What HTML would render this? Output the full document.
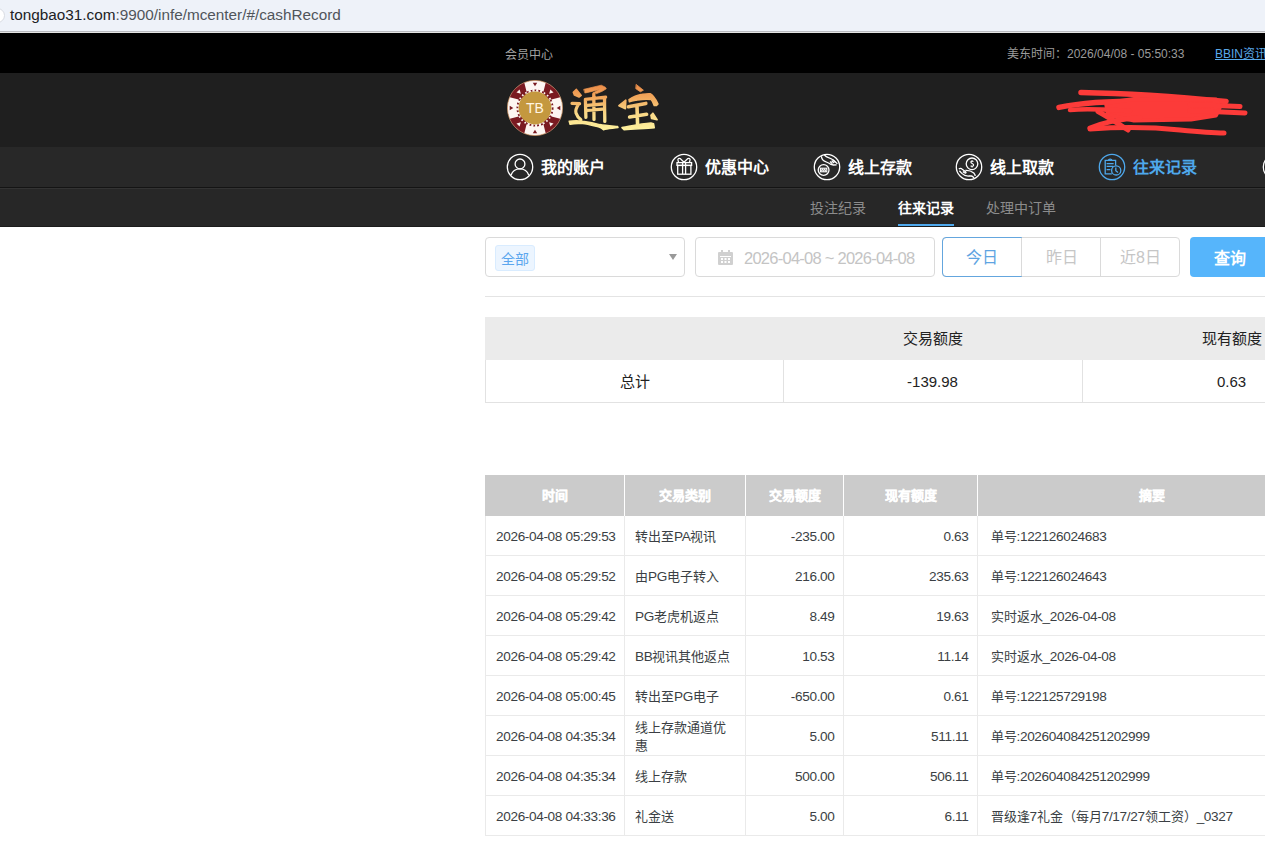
<!DOCTYPE html>
<html lang="zh-CN"><head><meta charset="utf-8"><title>cashRecord</title>
<style>
*{box-sizing:border-box;margin:0;padding:0}
html,body{width:1265px;height:843px;overflow:hidden;background:#fff}
body{position:relative;font-family:"Liberation Sans",sans-serif;color:#333}
.abs{position:absolute}
#url{left:0;top:0;width:1265px;height:31px;background:#eef2f9}
#url .lock{position:absolute;left:-10px;top:8px;width:15px;height:15px;border-radius:50%;background:#fff;border:1px solid #d8dbe2}
#url .t{position:absolute;left:10px;top:6px;font-size:15.3px;line-height:18px;color:#202124;white-space:nowrap}
#l1{left:0;top:31px;width:1265px;height:1px;background:#b9babf}
#l2{left:0;top:32px;width:1265px;height:1px;background:#e4e4e4}
#topbar{left:0;top:33px;width:1265px;height:40px;background:#000}
#topbar .m{position:absolute;left:505px;top:15px;font-size:12px;line-height:14px;color:#a3a3a3;white-space:nowrap}
#topbar .tm{position:absolute;left:1007px;top:13.5px;font-size:12px;line-height:14px;color:#9b9b9b;white-space:nowrap}
#topbar .bb{position:absolute;left:1215px;top:13.5px;font-size:12px;line-height:14px;color:#5aa9ea;text-decoration:underline;white-space:nowrap}
#header{left:0;top:73px;width:1265px;height:74px;background:#1f1f1f}
#logo-chip{position:absolute;left:507px;top:7px}
#logo-txt{position:absolute;left:567px;top:7px}
#scrib{position:absolute;left:1050px;top:7px}
#nav{left:0;top:147px;width:1265px;height:40px;background:#282828}
#nav .ic{position:absolute;top:4px;width:32px;height:32px}
#nav .tx{position:absolute;top:11px;font-size:16px;line-height:20px;font-weight:bold;color:#fff;white-space:nowrap}
#nav .on{color:#4ea8ec}
#l3{left:0;top:187px;width:1265px;height:1px;background:#141414}
#l4{left:0;top:188px;width:1265px;height:1px;background:#333}
#subnav{left:0;top:189px;width:1265px;height:38px;background:#272727}
#subnav .s{position:absolute;top:10px;font-size:14px;line-height:18px;color:#8c8c8c;white-space:nowrap}
#subnav .son{color:#fff;font-weight:bold}
#subnav .ul{position:absolute;left:898px;top:35px;width:56px;height:3px;background:#4ea8ec}
#l5{left:0;top:226px;width:1265px;height:1px;background:#1c1c1c}
/* filter */
#sel{left:485px;top:237px;width:200px;height:40px;border:1px solid #dadada;border-radius:4px;background:#fff}
#sel .tag{position:absolute;left:9px;top:7px;width:40px;height:26px;background:#ecf5ff;border:1px solid #d9ecff;border-radius:3px;color:#5ba6ee;font-size:14px;line-height:26px;text-align:center}
#sel .arr{position:absolute;left:183px;top:16px;width:0;height:0;border-left:4px solid transparent;border-right:4px solid transparent;border-top:6px solid #999}
#date{left:695px;top:237px;width:240px;height:40px;border:1px solid #dadada;border-radius:4px;background:#fff}
#date .cal{position:absolute;left:21px;top:11px}
#date .t{position:absolute;left:48px;top:10px;font-size:16.5px;letter-spacing:-0.75px;line-height:20px;color:#c4c4c4;white-space:nowrap}
#bg{left:942px;top:237px;width:238px;height:40px;border:1px solid #dadada;border-radius:4px;background:#fff}
#bg .b{position:absolute;top:-1px;height:40px;font-size:16px;line-height:42px;text-align:center;color:#c6c6c6}
#bg .b1{left:-1px;width:80px;border:1px solid #64a6de;border-radius:4px 0 0 4px;color:#5ea4e2;line-height:40px}
#bg .d{position:absolute;top:0;width:1px;height:38px;background:#dadada}
#q{left:1190px;top:237px;width:80px;height:40px;background:#56b5fb;border-radius:4px;color:#fff;font-size:16px;font-weight:bold;line-height:43px;text-align:center}
#hr{left:485px;top:296px;width:780px;height:1px;background:#e4e4e4}
/* summary */
#sum{left:485px;top:317px;width:900px;height:86px}
#sum .h{position:absolute;left:0;top:0;width:900px;height:43px;background:#ebebeb}
#sum .c{position:absolute;font-size:15px;line-height:18px;color:#222;text-align:center;white-space:nowrap}
#sum .r{position:absolute;left:0;top:43px;width:900px;height:43px;border:1px solid #e2e2e2;border-top:none}
#sum .v{position:absolute;top:43px;width:1px;height:42px;background:#e2e2e2}
/* detail table */
#tbl{left:485px;top:475px;width:840px;height:361px}
#tbl .th{position:absolute;top:0;height:41px;background:#cbcbcb;color:#fff;font-weight:bold;font-size:13px;line-height:42px;text-align:center;-webkit-text-stroke:0.25px #fff}
#tbl .tr{position:absolute;left:0;width:840px;height:40px;border-bottom:1px solid #eaeaea}
#tbl .td{position:absolute;top:0;height:40px;font-size:13px;line-height:16px;color:#3b3f44;padding:13px 10px 0 10px;white-space:nowrap;border-left:1px solid #eaeaea}
#tbl .l{font-size:13.6px;letter-spacing:-0.35px}
#tbl .td.num{text-align:right;padding-right:8.5px}
#tbl .td.two{padding-top:3px;line-height:18px}

</style></head><body>
<div id="url" class="abs"><div class="lock"></div><div class="t">tongbao31.com<span style="color:#50555b">:9900/infe/mcenter/#/cashRecord</span></div></div>
<div id="l1" class="abs"></div><div id="l2" class="abs"></div>
<div id="topbar" class="abs">
  <div class="m">会员中心</div>
  <div class="tm">美东时间：2026/04/08 - 05:50:33</div>
  <div class="bb">BBIN资讯</div>
</div>
<div id="header" class="abs">
  <svg id="logo-chip" width="56" height="56" viewBox="0 0 56 56">
    <circle cx="28" cy="28" r="27.6" fill="#fdf6f2" stroke="#d49560" stroke-width="0.7"/>
    <g fill="#7a1a21"><path d="M36.00 13.57 L38.71 2.78 A27.4 27.4 0 0 1 53.22 17.29 L42.43 20.00 Z"/><path d="M42.43 36.00 L53.22 38.71 A27.4 27.4 0 0 1 38.71 53.22 L36.00 42.43 Z"/><path d="M20.00 42.43 L17.29 53.22 A27.4 27.4 0 0 1 2.78 38.71 L13.57 36.00 Z"/><path d="M13.57 20.00 L2.78 17.29 A27.4 27.4 0 0 1 17.29 2.78 L20.00 13.57 Z"/></g>
    <circle cx="28" cy="28" r="17.6" fill="none" stroke="#7a1a21" stroke-width="1.8" stroke-dasharray="2 1.9"/>
    <circle cx="28" cy="28" r="17.6" fill="none" stroke="#fdf6f2" stroke-width="1.8" stroke-dasharray="1.6 2.3" stroke-dashoffset="2"/>
    <circle cx="28" cy="28" r="16.4" fill="#c4983f"/>
    <g fill="#7a1a21"><path d="M30.20 2.70 L25.80 2.70 L28.00 6.30 Z"/><path d="M53.30 30.20 L53.30 25.80 L49.70 28.00 Z"/><path d="M25.80 53.30 L30.20 53.30 L28.00 49.70 Z"/><path d="M2.70 25.80 L2.70 30.20 L6.30 28.00 Z"/></g>
    <g fill="#fdf6f2"><path d="M46.53 12.59 L43.41 9.47 L42.14 13.86 Z"/><path d="M43.41 46.53 L46.53 43.41 L42.14 42.14 Z"/><path d="M9.47 43.41 L12.59 46.53 L13.86 42.14 Z"/><path d="M12.59 9.47 L9.47 12.59 L13.86 13.86 Z"/></g>
    <text x="28" y="33.2" text-anchor="middle" font-family="Liberation Sans" font-size="14" fill="#fff5e2">TB</text>
  </svg>
  <svg id="logo-txt" width="100" height="56" viewBox="0 0 100 56">
    <defs><linearGradient id="gg" gradientUnits="userSpaceOnUse" x1="0" y1="4" x2="0" y2="51">
      <stop offset="0" stop-color="#eb8a47"/><stop offset="0.3" stop-color="#f2a95d"/><stop offset="0.6" stop-color="#f9d684"/><stop offset="1" stop-color="#fff4a0"/></linearGradient></defs>
    <g fill="url(#gg)" stroke="url(#gg)" stroke-linejoin="round" stroke-linecap="round">
      <!-- 通 -->
      <path d="M6.3 12.3 L9.4 9.4 L14.2 15.4 L12 17 L7.5 15.1 Z" stroke-width="1.6"/>
      <path d="M5 23.3 L12.6 23.6 M11.4 24.4 C9.4 27.5 8 30 9 33 C10 36 12 38.4 13.8 39.6" fill="none" stroke-width="3.2"/>
      <path d="M2.2 41.2 C8 40.4 12 40.6 15.7 41.2 C22 42 28 43.2 32.7 44.6 C38 45.6 44 46 50.6 46.6 L51 47.6 C46 48.4 40 48.6 36.5 49.8 C35 48.4 34 47.6 32.7 47.2 C26 45.6 20 44 15.7 43.6 C10 43.2 6 43.6 3.1 44.2 Z" stroke-width="1.5"/>
      <path d="M17 9.3 L34.3 5.2 L38.4 7.2 L39.3 8.8 L35.2 11.3 L29.6 13.6 L26.6 12.6 L32.4 9.6 L20.8 12.4 L18.2 12.9 Z" stroke-width="0.7"/>
      <path d="M18.4 20 L18.9 37.4 M18.4 19.4 L38.6 17.2 M37.6 17.6 C37.4 25 37.8 34 37.8 41.4 M26.8 14 L27 39.4 M20.2 25.4 L35.4 24 M20.2 30.4 L35.4 29.2" fill="none" stroke-width="3.3"/>
      <!-- 宝 -->
      <path d="M69.4 4.6 L76.4 10.2 L73.4 11.8 L69 8.8 Z" stroke-width="0.8"/>
      <path d="M51.9 25.7 L58.8 20.2 L58.4 28.7 Z" stroke-width="1.6"/>
      <path d="M62 19.6 C66 17 70 15.2 74 14.6 C78 14 81 13.4 83.2 13.8 C86 15 88.5 19 91 24 L89.5 25.4 L87.2 25.4 C86 22 85 20.6 84.2 19.6 C80 19 75 19.4 70 20 C67 20.6 64.5 21 62.4 21.8 Z" stroke-width="1.5"/>
      <path d="M61.4 26.8 L78.8 23.4 M62.6 37 L79.6 34.2 M70 26 L70.6 45.8" fill="none" stroke-width="3.6"/>
      <path d="M83.9 35.2 L85.9 33.2 L90.1 39.8 L84.6 38.5 Z" stroke-width="1.6"/>
      <path d="M55 47.6 C62 46.6 72 44 83.9 43 L86.5 43.7 L87.2 47.6 C80 48.6 70 48.6 57.1 49.6 Z" stroke-width="1.6"/>
    </g>
  </svg>
  <svg id="scrib" width="200" height="60" viewBox="0 0 200 60" fill="none" stroke="#fc3b39" stroke-linecap="round" stroke-linejoin="round">
    <path d="M31 12.5 C60 13 120 16 176 21.6" stroke-width="5.5"/>
    <path d="M9 27.4 C30 23 60 21 95 21" stroke-width="5.5"/>
    <path d="M56 23 L84 19 L166 19.5 L170 27 L166 35.5 L141 39.5 L84 40.5 L58 35 Z" fill="#fc3b39" stroke-width="4"/>
    <path d="M140 24.5 L190 26.6 M140 30.5 L195 33" stroke-width="5"/>
    <path d="M20 30 C40 28 60 30 80 31" stroke-width="4.5"/>
    <path d="M48 31.5 C60 38 70 45 78 50" stroke-width="5"/>
    <path d="M40 48 C55 42 70 39 90 37.5" stroke-width="5"/>
    <path d="M40 49 C70 47 100 47 130 50 C150 52 165 53 174 53" stroke-width="5"/>
  </svg>
</div>
<div id="nav" class="abs">
  <svg class="ic" style="left:504px" viewBox="0 0 32 32" fill="none" stroke="#fff" stroke-width="1.3">
    <circle cx="16" cy="16" r="12.7"/><circle cx="16" cy="12.9" r="4.9"/><path d="M7 24.2 A9.4 9.4 0 0 1 24.8 24.2"/>
  </svg>
  <div class="tx" style="left:541px">我的账户</div>
  <svg class="ic" style="left:668px" viewBox="0 0 32 32" fill="none" stroke="#fff" stroke-width="1.3">
    <circle cx="16" cy="16" r="12.7"/>
    <rect x="9" y="11.6" width="14.6" height="2.8"/><rect x="9.7" y="14.4" width="13.2" height="8.8"/>
    <path d="M14.6 11.6 V23.2 M17.6 11.6 V23.2"/>
    <path d="M16 11.2 L12.2 7.6 Q10 6.8 9.9 8.8 L10.6 11.4 M16 11.2 L19.8 7.6 Q22 6.8 22.1 8.8 L21.4 11.4"/>
  </svg>
  <div class="tx" style="left:705px">优惠中心</div>
  <svg class="ic" style="left:811px" viewBox="0 0 32 32" fill="none" stroke="#fff" stroke-width="1.3">
    <circle cx="16" cy="16" r="12.7"/>
    <path d="M10.4 5.2 C10.6 8 12 9.6 14.5 10.6 C16.5 11.4 18.6 12.2 20 13.4 L22.4 14 L25.6 13.8"/>
    <path d="M13.4 4 C14.6 5.4 15.6 6.2 17.5 6.7 C19.6 7.3 21.6 8.4 23.6 10.2 L26.4 12.8"/>
    <path d="M19 10.5 L21.4 12.8 M20.6 9.6 L23 12 M22 8.8 L24.4 11.2"/>
    <circle cx="12.6" cy="19" r="5.4"/>
    <rect x="9.4" y="17.2" width="6.4" height="3.6" stroke-width="1.1"/>
    <path d="M10.2 20.6 L11.2 17.6 L12.2 20.6 L13.2 17.6 L14.2 20.6 L15.2 17.6" stroke-width="0.9"/>
  </svg>
  <div class="tx" style="left:848px">线上存款</div>
  <svg class="ic" style="left:953px" viewBox="0 0 32 32" fill="none" stroke="#fff" stroke-width="1.3">
    <circle cx="16" cy="16" r="12.7"/>
    <circle cx="19" cy="12.8" r="5.8"/>
    <path d="M20.4 10.6 C19.6 9.8 17.8 10 17.9 11.3 C18 12.6 20.6 12.4 20.6 14 C20.6 15.4 18.6 15.6 17.6 14.8 M19.1 9.3 V10.2 M19.1 15.6 V16.4" stroke-width="1.2"/>
    <path d="M5.8 17.8 C7.4 17 8.6 17.4 9.6 18.6 L12.6 20.8 C13.4 21.4 13 22.4 12 22 L9.8 20.6"/>
    <path d="M6.4 19.8 L8.8 22.4 C11 24.6 13.6 25.2 16 25 L18.4 25 C19.4 25.2 20.4 26 21 27.2"/>
    <path d="M12.4 19.4 C15.4 19.2 18.6 20.2 20.8 22 C21.6 22.8 22.2 24 22.2 25"/>
  </svg>
  <div class="tx" style="left:990px">线上取款</div>
  <svg class="ic" style="left:1096px" viewBox="0 0 32 32" fill="none" stroke="#4ea8ec" stroke-width="1.3">
    <circle cx="16" cy="16" r="12.7"/>
    <path d="M15.8 22.8 H9.2 V9.4 H19.6 V14.6"/>
    <path d="M12.4 9.4 C12.6 7.8 15.6 7.4 15.8 9.4" />
    <path d="M10.6 12.6 H17.6 M10.6 15.4 H17.4 M10.6 18.6 H14.4"/>
    <circle cx="20.2" cy="19.4" r="4.6"/>
    <path d="M19.8 16.4 V19.8 L22 21.6"/>
  </svg>
  <div class="tx on" style="left:1133px">往来记录</div>
  <svg class="ic" style="left:1260px" viewBox="0 0 32 32" fill="none" stroke="#fff" stroke-width="1.3">
    <circle cx="16" cy="16" r="12.7"/>
  </svg>
</div>
<div id="l3" class="abs"></div><div id="l4" class="abs"></div>
<div id="subnav" class="abs">
  <div class="s" style="left:810px">投注纪录</div>
  <div class="s son" style="left:898px">往来记录</div>
  <div class="s" style="left:986px">处理中订单</div>
  <div class="ul"></div>
</div>
<div id="l5" class="abs"></div>

<div id="sel" class="abs"><div class="tag">全部</div><div class="arr"></div></div>
<div id="date" class="abs">
  <svg class="cal" width="17" height="17" viewBox="0 0 17 17"><rect x="1" y="3" width="15" height="13" rx="1" fill="#d0d0d0"/><rect x="4" y="1" width="2" height="4" fill="#d0d0d0"/><rect x="11" y="1" width="2" height="4" fill="#d0d0d0"/><g fill="#fff"><rect x="3" y="7" width="11" height="1"/><rect x="4" y="9" width="2" height="2"/><rect x="7.5" y="9" width="2" height="2"/><rect x="11" y="9" width="2" height="2"/><rect x="4" y="12" width="2" height="2"/><rect x="7.5" y="12" width="2" height="2"/><rect x="11" y="12" width="2" height="2"/></g></svg>
  <div class="t">2026-04-08 ~ 2026-04-08</div>
</div>
<div id="bg" class="abs">
  <div class="b b1">今日</div>
  <div class="d" style="left:78px"></div>
  <div class="b" style="left:79px;width:79px">昨日</div>
  <div class="d" style="left:157px"></div>
  <div class="b" style="left:158px;width:79px">近8日</div>
</div>
<div id="q" class="abs">查询</div>
<div id="hr" class="abs"></div>

<div id="sum" class="abs">
  <div class="h"></div>
  <div class="c" style="left:298px;width:299px;top:13px">交易额度</div>
  <div class="c" style="left:597px;width:299px;top:13px">现有额度</div>
  <div class="r"></div>
  <div class="v" style="left:298px"></div>
  <div class="v" style="left:597px"></div>
  <div class="c" style="left:0;width:299px;top:56px">总计</div>
  <div class="c" style="left:298px;width:299px;top:56px">-139.98</div>
  <div class="c" style="left:597px;width:299px;top:56px">0.63</div>
</div>

<div id="tbl" class="abs">
  <div class="th" style="left:0;width:139px">时间</div>
  <div class="th" style="left:140px;width:120px">交易类别</div>
  <div class="th" style="left:261px;width:97px">交易额度</div>
  <div class="th" style="left:359px;width:133px">现有额度</div>
  <div class="th" style="left:493px;width:347px">摘要</div>
<div class="tr" style="top:41px"><div class="td" style="left:0px;width:139px;padding-left:10px;"><span class="l">2026-04-08 05:29:53</span></div><div class="td" style="left:139px;width:121px;padding-left:10px;">转出至<span class="l">PA</span>视讯</div><div class="td num" style="left:260px;width:98px;"><span class="l">-235.00</span></div><div class="td num" style="left:358px;width:134px;"><span class="l">0.63</span></div><div class="td" style="left:492px;width:347px;padding-left:12.5px;">单号<span class="l">:122126024683</span></div></div>
<div class="tr" style="top:81px"><div class="td" style="left:0px;width:139px;padding-left:10px;"><span class="l">2026-04-08 05:29:52</span></div><div class="td" style="left:139px;width:121px;padding-left:10px;">由<span class="l">PG</span>电子转入</div><div class="td num" style="left:260px;width:98px;"><span class="l">216.00</span></div><div class="td num" style="left:358px;width:134px;"><span class="l">235.63</span></div><div class="td" style="left:492px;width:347px;padding-left:12.5px;">单号<span class="l">:122126024643</span></div></div>
<div class="tr" style="top:121px"><div class="td" style="left:0px;width:139px;padding-left:10px;"><span class="l">2026-04-08 05:29:42</span></div><div class="td" style="left:139px;width:121px;padding-left:10px;"><span class="l">PG</span>老虎机返点</div><div class="td num" style="left:260px;width:98px;"><span class="l">8.49</span></div><div class="td num" style="left:358px;width:134px;"><span class="l">19.63</span></div><div class="td" style="left:492px;width:347px;padding-left:12.5px;">实时返水<span class="l">_2026-04-08</span></div></div>
<div class="tr" style="top:161px"><div class="td" style="left:0px;width:139px;padding-left:10px;"><span class="l">2026-04-08 05:29:42</span></div><div class="td" style="left:139px;width:121px;padding-left:10px;"><span class="l">BB</span>视讯其他返点</div><div class="td num" style="left:260px;width:98px;"><span class="l">10.53</span></div><div class="td num" style="left:358px;width:134px;"><span class="l">11.14</span></div><div class="td" style="left:492px;width:347px;padding-left:12.5px;">实时返水<span class="l">_2026-04-08</span></div></div>
<div class="tr" style="top:201px"><div class="td" style="left:0px;width:139px;padding-left:10px;"><span class="l">2026-04-08 05:00:45</span></div><div class="td" style="left:139px;width:121px;padding-left:10px;">转出至<span class="l">PG</span>电子</div><div class="td num" style="left:260px;width:98px;"><span class="l">-650.00</span></div><div class="td num" style="left:358px;width:134px;"><span class="l">0.61</span></div><div class="td" style="left:492px;width:347px;padding-left:12.5px;">单号<span class="l">:122125729198</span></div></div>
<div class="tr" style="top:241px"><div class="td" style="left:0px;width:139px;padding-left:10px;"><span class="l">2026-04-08 04:35:34</span></div><div class="td two" style="left:139px;width:121px;padding-left:10px;">线上存款通道优<br>惠</div><div class="td num" style="left:260px;width:98px;"><span class="l">5.00</span></div><div class="td num" style="left:358px;width:134px;"><span class="l">511.11</span></div><div class="td" style="left:492px;width:347px;padding-left:12.5px;">单号<span class="l">:202604084251202999</span></div></div>
<div class="tr" style="top:281px"><div class="td" style="left:0px;width:139px;padding-left:10px;"><span class="l">2026-04-08 04:35:34</span></div><div class="td" style="left:139px;width:121px;padding-left:10px;">线上存款</div><div class="td num" style="left:260px;width:98px;"><span class="l">500.00</span></div><div class="td num" style="left:358px;width:134px;"><span class="l">506.11</span></div><div class="td" style="left:492px;width:347px;padding-left:12.5px;">单号<span class="l">:202604084251202999</span></div></div>
<div class="tr" style="top:321px"><div class="td" style="left:0px;width:139px;padding-left:10px;"><span class="l">2026-04-08 04:33:36</span></div><div class="td" style="left:139px;width:121px;padding-left:10px;">礼金送</div><div class="td num" style="left:260px;width:98px;"><span class="l">5.00</span></div><div class="td num" style="left:358px;width:134px;"><span class="l">6.11</span></div><div class="td" style="left:492px;width:347px;padding-left:12.5px;">晋级逢<span class="l">7</span>礼金（每月<span class="l">7/17/27</span>领工资）<span class="l">_0327</span></div></div>
</div>

</body></html>
